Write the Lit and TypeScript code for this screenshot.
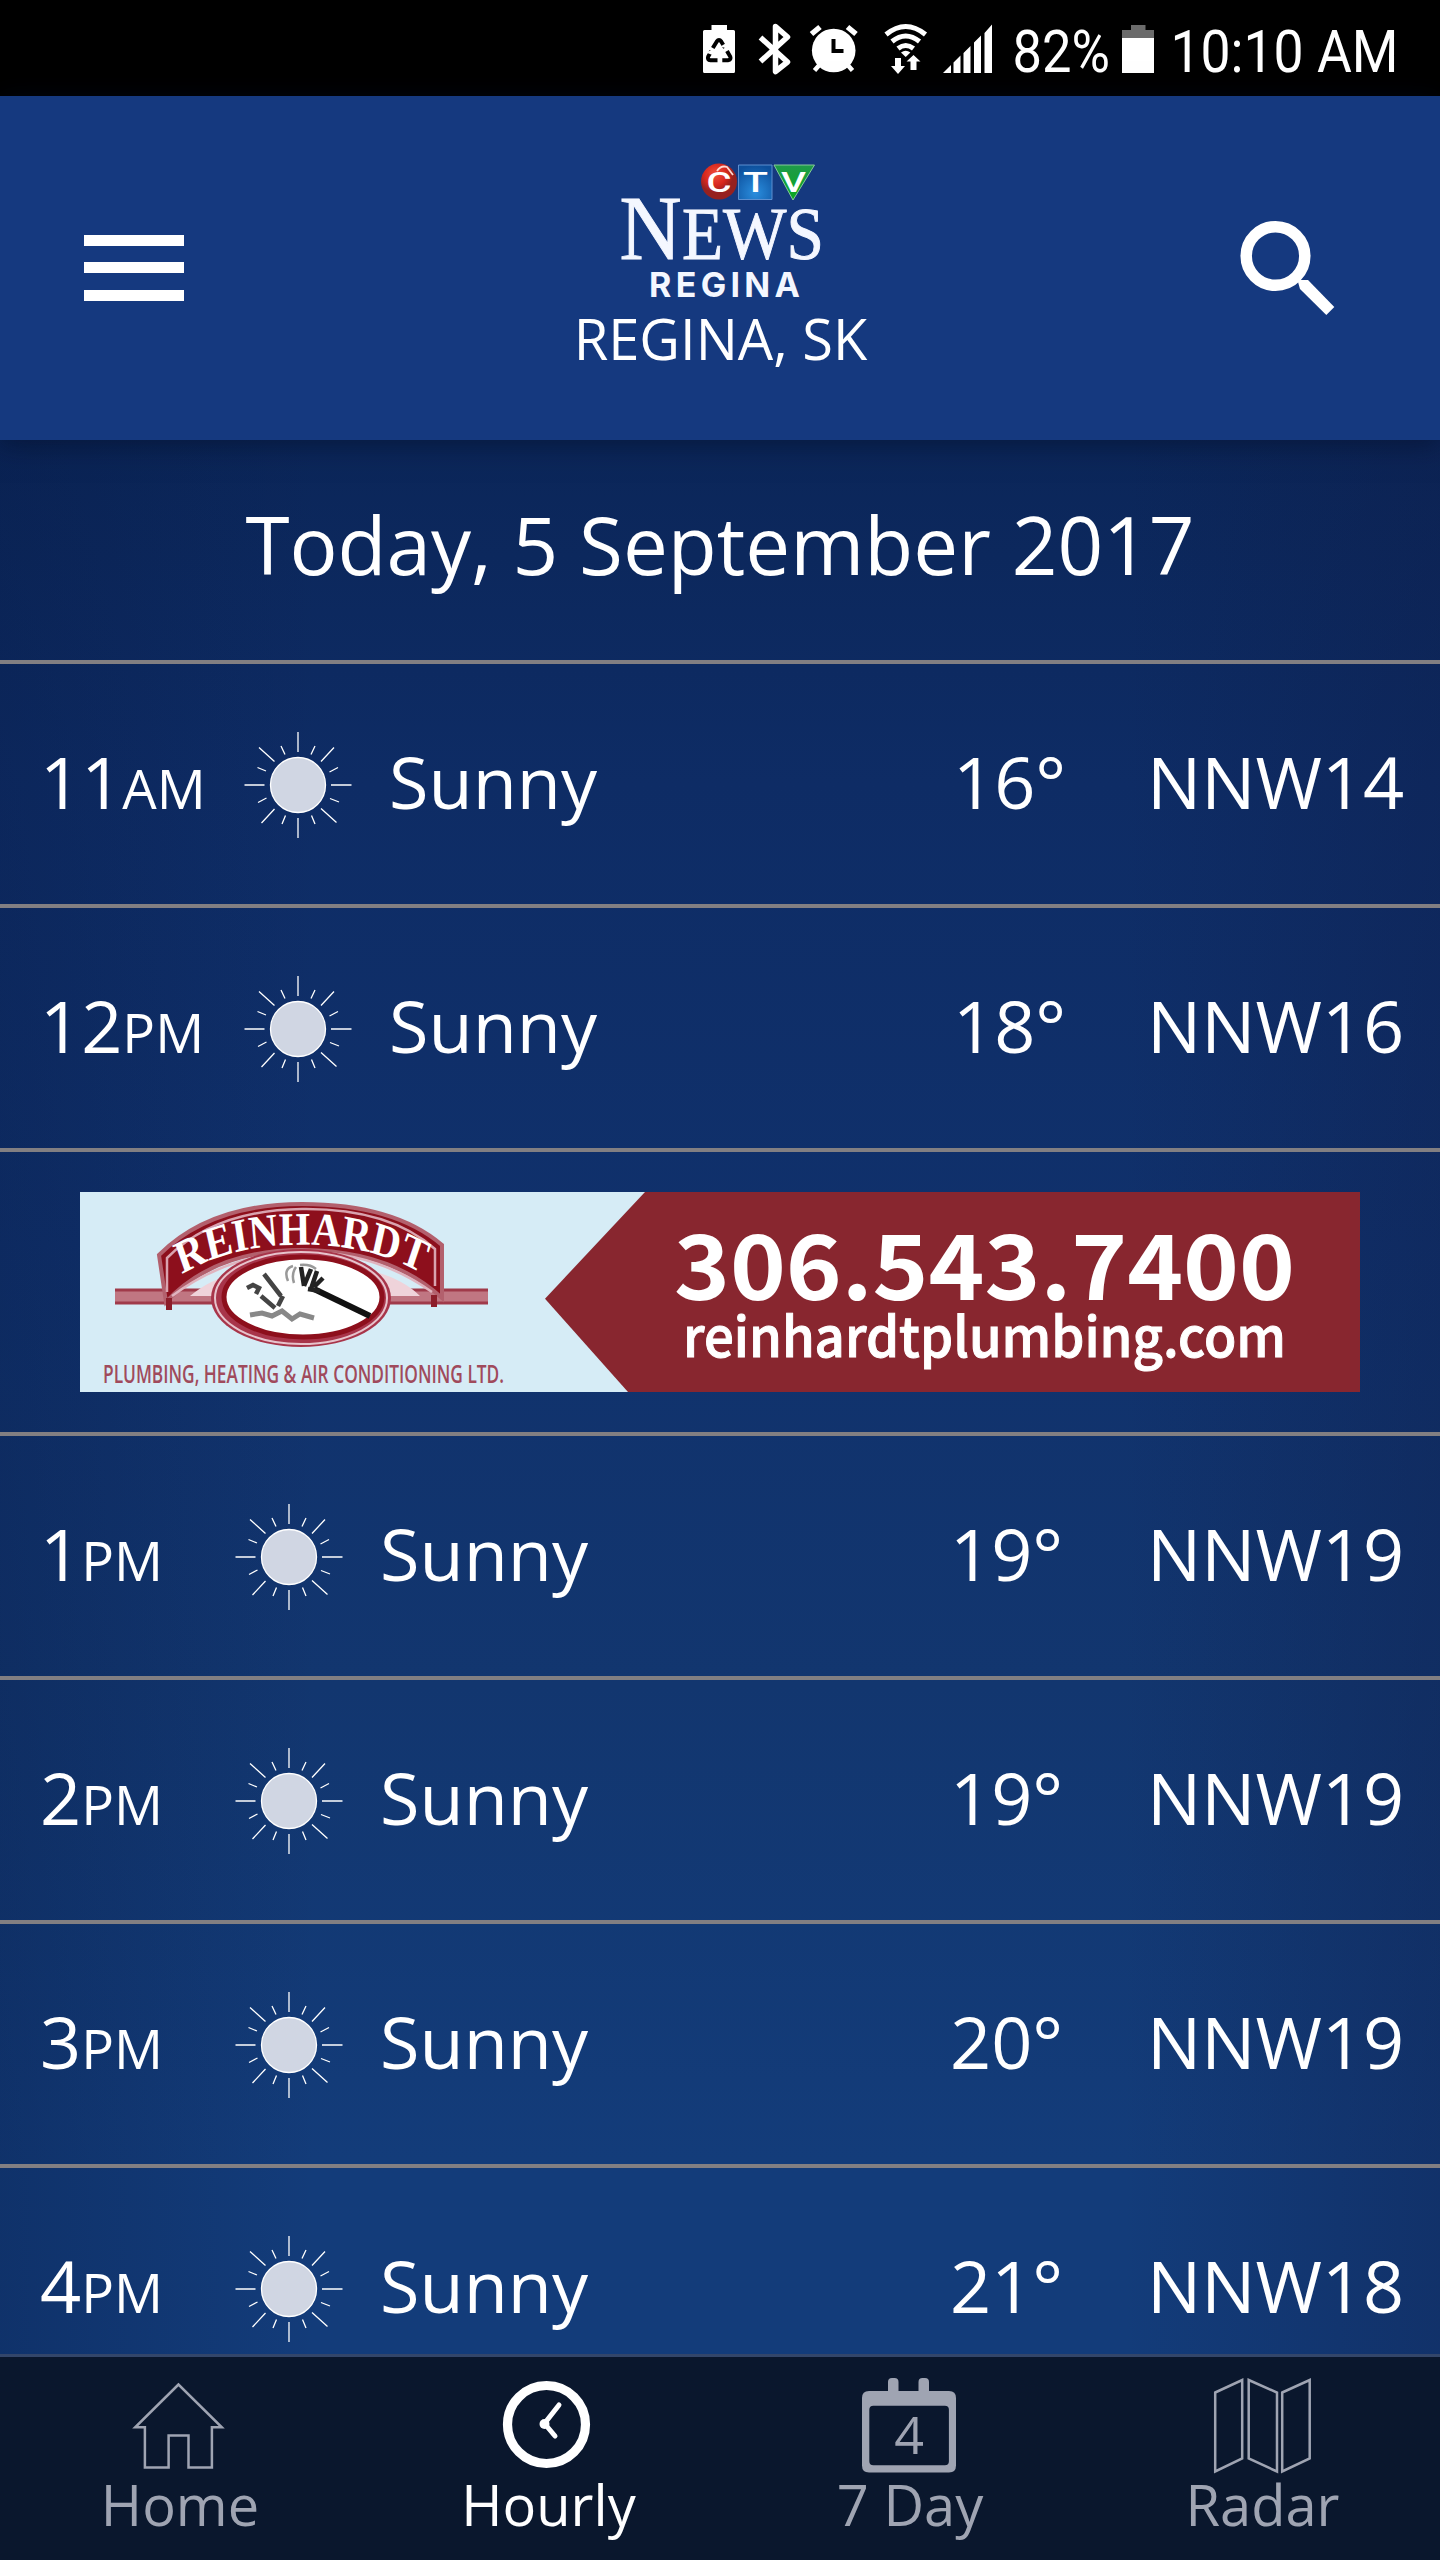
import { LitElement, html, svg, css } from "lit";
import { customElement } from "lit/decorators.js";
import { classMap } from "lit/directives/class-map.js";

interface Hour {
  hour: string;
  period: string;
  condition: string;
  temp: string;
  wind: string;
}

const MORNING: Hour[] = [
  { hour: "11", period: "AM", condition: "Sunny", temp: "16°", wind: "NNW14" },
  { hour: "12", period: "PM", condition: "Sunny", temp: "18°", wind: "NNW16" },
];

const AFTERNOON: Hour[] = [
  { hour: "1", period: "PM", condition: "Sunny", temp: "19°", wind: "NNW19" },
  { hour: "2", period: "PM", condition: "Sunny", temp: "19°", wind: "NNW19" },
  { hour: "3", period: "PM", condition: "Sunny", temp: "20°", wind: "NNW19" },
  { hour: "4", period: "PM", condition: "Sunny", temp: "21°", wind: "NNW18" },
];

@customElement("status-bar")
class StatusBar extends LitElement {
  static styles = css`
    :host {
      display: flex;
      height: 96px;
      background: #000;
      padding-left: 703px;
      box-sizing: border-box;
      flex: none;
    }
    svg { display: block; height: 96px; fill: #fff; flex: none; overflow: visible; }
    text { font-family: Roboto, sans-serif; font-size: 60px; }
    .recycle { margin-right: 24px; }
    .bt { margin-right: 19px; }
    .alarm { margin-right: 26px; }
    .wifi { margin-right: 16px; }
    .signal { margin-right: 18px; }
  `;
  render() {
    return html`
      <svg class="recycle" width="32" viewBox="703 0 32 96">
        <path d="M711.5 25h15.5v5h6.5q1.500 0 1.500 1.500v40q0 1.500-1.500 1.500h-29q-1.500 0-1.500-1.500v-40q0-1.500 1.500-1.500h7z"/>
        <g fill="none" stroke="#000" stroke-width="4">
          <path d="M712.800 48l4-6.500q2.200-3 4.400 0l3.800 6.300"/>
          <path d="M727 51l3.200 5.500q1.300 3.300-2.200 3.700h-7.500"/>
          <path d="M717.500 60.200h-7q-3.500-.3-2.300-3.700l3.200-5.500"/>
        </g>
        <path d="M720.500 46.500l7 2.200v-6.500zM722.300 55.500v9.500l-4.500-4.800zM706 52.500l6.800-3 1 6z"/>
      </svg>
      <svg class="bt" width="32" viewBox="759 0 32 96">
        <path fill="none" stroke="#fff" stroke-width="5.500" stroke-linejoin="round"
          d="M760.500 37.500L787.500 62 775.500 71.500V26.500L787.500 37 760.500 61.500"/>
      </svg>
      <svg class="alarm" width="48" viewBox="810 0 48 96">
        <circle cx="833.700" cy="50.500" r="21.800"/>
        <g stroke="#fff" stroke-width="5.500">
          <path d="M811.500 34l8.500-7M856 34l-8.500-7"/>
          <path stroke-width="4.500" d="M822 62l-7.500 8.500M845 62l7.500 8.500"/>
        </g>
        <path fill="none" stroke="#000" stroke-width="4" d="M833.500 39v12h10"/>
      </svg>
      <svg class="wifi" width="43" viewBox="884 0 43 96">
        <g fill="none" stroke="#fff" stroke-width="5">
          <path d="M886 34.500q19.700-16 39.500 0"/>
          <path d="M892 41.500q13.700-11 27.500 0"/>
          <path d="M898 48.500q7.700-6 15.500 0"/>
        </g>
        <path d="M901 52.500q4.700-3.500 9.400 0l-4.700 4.500z"/>
        <path d="M895 58h6v8h4l-7 8-7-8h4zM910.500 70h6v-8.500h4l-7-6.500-7 6.500h4z"/>
      </svg>
      <svg class="signal" width="50" viewBox="943 0 50 96">
        <path d="M943 73l8-8v8zM953.500 73v-10.500l7-7V73zM963.500 73V53l7-7v27zM974 73V42.500l7-7V73zM984.500 73V33l7.500-8.500V73z"/>
      </svg>
      <svg width="111" viewBox="1011 0 111 96">
        <text x="1012.500" y="72" textLength="97.500" lengthAdjust="spacingAndGlyphs">82%</text>
      </svg>
      <svg width="32" viewBox="1122 0 32 96">
        <path fill="#6b6b6b" d="M1131 25h14.500v5h8.500v9h-32v-9h9z"/>
        <path d="M1122 38h32v35h-32z"/>
      </svg>
      <svg width="260" viewBox="1154 0 260 96">
        <text x="1170.500" y="72" textLength="228" lengthAdjust="spacingAndGlyphs">10:10 AM</text>
      </svg>
    `;
  }
}

@customElement("app-header")
class AppHeader extends LitElement {
  static styles = css`
    :host {
      display: grid;
      grid-template-columns: 84px 1fr 94px 106px;
      height: 344px;
      background: #15397f;
      flex: none;
      box-shadow: 0 4px 26px rgba(3, 12, 36, 0.55);
      position: relative;
    }
    .menu { display: flex; flex-direction: column; gap: 16px; grid-column: 2; padding-top: 139px; grid-row: 1; }
    .menu i { display: block; width: 100px; height: 11px; background: #fff; }
    .menu i:last-child { margin-top: 1px; }
    .brand {
      grid-column: 1 / -1; grid-row: 1;
      display: flex; flex-direction: column; align-items: center;
      padding: 54px 0 0 4px;
    }
    .place {
      font: 56px/76px "Open Sans", sans-serif;
      color: #fff;
      margin: -2px 3px 0 0;
    }
    .search { grid-column: 3; grid-row: 1; padding-top: 124px; }
    svg { display: block; overflow: visible; }
    .serif { font-family: "Liberation Serif", serif; fill: #f4f7ff; stroke: #f4f7ff; stroke-width: 1; }
    .station { font: 700 34px Inter, sans-serif; fill: #f4f7ff; }
    .bug { font: 500 28px Roboto, sans-serif; fill: #fff; }
  `;
  render() {
    return html`
      <div class="menu"><i></i><i></i><i></i></div>
      <div class="brand">
        <svg width="320" height="152" viewBox="562 150 320 152">
          <defs>
            <radialGradient id="r" cx=".4" cy=".3"><stop offset="0" stop-color="#f0503c"/><stop offset=".6" stop-color="#d8281e"/><stop offset="1" stop-color="#96211f"/></radialGradient>
            <radialGradient id="b" cx=".5" cy=".8" r=".8"><stop offset="0" stop-color="#2a8ede"/><stop offset="1" stop-color="#0d4f9c"/></radialGradient>
            <linearGradient id="g" x2="0" y2="1"><stop offset="0" stop-color="#1f9a4a"/><stop offset="1" stop-color="#08a81e"/></linearGradient>
          </defs>
          <circle cx="719" cy="181.500" r="18" fill="url(#r)"/>
          <path d="M717 171q4-6 10-4l6 8" fill="none" stroke="#ffd9d0" stroke-width="1.800"/>
          <path d="M738.500 165h33.500v34.500h-33.500z" fill="url(#b)" stroke="#5c8fd0" stroke-width="1"/>
          <path d="M774 165h40.500l-21.500 35z" fill="url(#g)" stroke="#86c99a" stroke-width="1"/>
          <text class="bug" x="706.500" y="192" textLength="25" lengthAdjust="spacingAndGlyphs">C</text>
          <text class="bug" x="743" y="192" textLength="25" lengthAdjust="spacingAndGlyphs">T</text>
          <text class="bug" x="781" y="191.500" textLength="25" lengthAdjust="spacingAndGlyphs">V</text>
          <text class="serif" font-size="92" x="619.500" y="259" textLength="62" lengthAdjust="spacingAndGlyphs">N</text>
          <text class="serif" font-size="75" x="682" y="259" textLength="142" lengthAdjust="spacingAndGlyphs">EWS</text>
          <text class="station" x="649" y="296.500" textLength="151" lengthAdjust="spacing">REGINA</text>
        </svg>
        <div class="place">REGINA, SK</div>
      </div>
      <div class="search">
        <svg width="94" height="96" viewBox="1240 220 94 96">
          <circle cx="1275.500" cy="256" r="29.300" fill="none" stroke="#fff" stroke-width="11.500"/>
          <path fill="#fff" d="M1298 282l2-2h8l26.300 27-8 8L1300 289z"/>
        </svg>
      </div>
    `;
  }
}

@customElement("sun-icon")
class SunIcon extends LitElement {
  static styles = css`
    :host { display: block; width: 108px; height: 108px; }
    svg { display: block; }
  `;
  render() {
    return html`
      <svg width="108" height="108" viewBox="-54 -54 108 108" fill="none" stroke="#fff" stroke-width="1.300">
        <circle r="27.500" fill="#d0d6e3"/>
        <path d="M0-53v20M0 33v20M-53.500 0h20M33 0h20.500M-39-37.500l15.500 14M36-37.500L23-23.500M-36.500 38L-23.500 24M38.500 37.500L23 23.500"/>
        <path d="M-17-39l4 8.500M17-39l-4 8.500M-16 39l3.500-8.500M17 39l-3.500-8.500M-40.500-17.500l8.500 3.500M40-17.500l-8.500 4.500M-40 17.500l8.500-4.500M41 17l-9-3.500"/>
      </svg>
    `;
  }
}

@customElement("ad-banner")
class AdBanner extends LitElement {
  static styles = css`
    :host { display: block; width: 1280px; height: 200px; margin: 40px 80px; }
    svg { display: block; }
    .arch { font: 700 39px "Liberation Serif", serif; fill: #fff; }
    .tag { font: 600 26px "Open Sans", sans-serif; fill: #a04a5c; }
    .phone { font: 700 90px "Noto Sans CJK JP", "Noto Sans", sans-serif; fill: #fff; }
    .site { font: 500 55px "Noto Sans CJK JP", "Noto Sans", sans-serif; fill: #fff; stroke: #fff; stroke-width: 1; }
  `;
  render() {
    return html`
      <svg width="1280" height="200" viewBox="0 0 1280 200">
        <path fill="#d6ecf6" d="M0 0h1280v200H0z"/>
        <path fill="#88262f" d="M565 0h715v200H548L465 106.700z"/>
        <path fill="#c07682" d="M35 98h373v13H35z"/>
        <path stroke="#a03a4a" stroke-width="3" fill="none" d="M35 111h373M35 98h373"/>
        <path fill="#efd3da" d="M110 104q22-18 42-20l-14 20zM296 80q28 8 44 24h-40z"/>
        <path fill="#8d0f1c" stroke="#b3606d" stroke-width="4" d="M79 63Q130 12 222 12T362 53V106Q310 58 222 58T86 110Z"/>
        <path fill="none" stroke="#d9a3af" stroke-width="2.500" d="M87 100V66Q135 18 222 17T355 57V94"/>
        <path fill="none" stroke="#e0b4bf" stroke-width="2.500" d="M92 104Q150 61 222 60T352 100"/>
        <path fill="none" stroke="#8c1d2a" stroke-width="6" d="M89 118v-12M354 115v-12"/>
        <ellipse cx="221" cy="106" rx="90" ry="49" fill="#a8354a"/>
        <ellipse cx="221" cy="106" rx="86" ry="46" fill="none" stroke="#e7c3cc" stroke-width="2"/>
        <ellipse cx="223" cy="105" rx="79" ry="40" fill="#fff" stroke="#8d0f1c" stroke-width="5"/>
        <path stroke="#111" stroke-width="6" d="M234 97l56 27"/>
        <path stroke="#222" stroke-width="4.500" fill="none" d="M221 75l3 19M231 77l-7 17M237 79l-6 18M243 86l-9 9M228 97l12 2"/>
        <path stroke="#999" stroke-width="2.500" fill="none" d="M208 89q-5-12 5-15M214 91q-3-9 2-16M220 73q10-1 16 4"/>
        <path stroke="#444" stroke-width="4.500" fill="none" d="M184 82l17 22M167 96l6-3 6 3-3 6M181 104l14 12M203 104l-5 10"/>
        <path stroke="#888" stroke-width="5" fill="none" d="M170 123l12-2 10 3 10-5 10 8 8-5 14 4"/>
        <g transform="scale(1 1.200)">
          <path id="arc" fill="none" d="M101 69.500Q150 44 222 44T344 69"/>
          <text class="arch"><textPath href="#arc" startOffset="1" textLength="247" lengthAdjust="spacingAndGlyphs">REINHARDT</textPath></text>
        </g>
        <text class="tag" x="23" y="191" textLength="401" lengthAdjust="spacingAndGlyphs">PLUMBING, HEATING &amp; AIR CONDITIONING LTD.</text>
        <text class="phone" x="594" y="107.500" textLength="621" lengthAdjust="spacingAndGlyphs">306.543.7400</text>
        <text class="site" x="603" y="165" textLength="603" lengthAdjust="spacingAndGlyphs">reinhardtplumbing.com</text>
      </svg>
    `;
  }
}

@customElement("tab-bar")
class TabBar extends LitElement {
  static styles = css`
    :host {
      display: grid;
      grid-template-columns: 360px 377px 346px 357px;
      height: 206px;
      box-sizing: border-box;
      border-top: 3px solid #33466a;
      background: #0a172d;
      flex: none;
    }
    .tab {
      display: flex; flex-direction: column; align-items: center;
      padding-top: 18px;
      color: #9fa4b2;
      font: 56px/76px "Open Sans", sans-serif;
    }
    .tab:last-child { padding-left: 2px; }
    .active { color: #fff; }
    .tab svg { display: block; margin-left: -4px; overflow: visible; }
    .label { margin-top: -9px; }
    .num { font-size: 52px; fill: currentColor; }
  `;
  render() {
    const house = svg`<path fill="none" stroke="currentColor" stroke-width="2.500" d="M50.500 9.500L7.200 52.300h9.700v40.200h23.700V60.500h19.900v32h23.400V52.300h9.900z"/>`;
    const clock = svg`<circle cx="49.500" cy="49.500" r="39" fill="none" stroke="currentColor" stroke-width="9.200"/>
      <circle cx="47.500" cy="49" r="5"/>
      <path fill="none" stroke="currentColor" stroke-width="5" stroke-linecap="round" d="M62 30L47.500 48.500l10.500 12.500"/>`;
    const calendar = svg`<path fill="currentColor" fill-rule="evenodd" d="M29 17V8q0-4 4-4h2.500q4 0 4 4v9h20V8q0-4 4-4h2.500q4 0 4 4v9h20q7 0 7 7v67.500q0 7-7 7H10q-7 0-7-7V24q0-7 7-7zM14.300 31.700q-4 0-4 4v51.600q0 4 4 4h71.600q4 0 4-4V35.700q0-4-4-4z" transform="translate(1 -1)"/>
      <text class="num" x="51" y="78.500" text-anchor="middle">4</text>`;
    const map = svg`<path fill="none" stroke="currentColor" stroke-width="2.500" transform="translate(1 -1)" d="M3.200 18.500l27-12.500v78.500l-27 13zM36.700 6l28.300 12.500v79l-28.300-13zM70.200 18.500L97.700 6v78.500l-27.500 13z"/>`;
    const tabs = [
      { label: "Home", icon: house, active: false },
      { label: "Hourly", icon: clock, active: true },
      { label: "7 Day", icon: calendar, active: false },
      { label: "Radar", icon: map, active: false },
    ];
    return tabs.map(
      (t) => html`
        <div class=${classMap({ tab: true, active: t.active })}>
          <svg width="100" height="100" viewBox="0 0 100 100" fill="currentColor">${t.icon}</svg>
          <div class="label">${t.label}</div>
        </div>
      `
    );
  }
}

@customElement("app-root")
class AppRoot extends LitElement {
  static styles = css`
    :host {
      display: flex;
      flex-direction: column;
      width: 1440px;
      height: 2560px;
      overflow: hidden;
      color: #fff;
      font-family: "Open Sans", sans-serif;
    }
    .content {
      flex: 1;
      min-height: 0;
      overflow: hidden;
      background:
        linear-gradient(90deg, rgba(6, 24, 66, 0.28), rgba(6, 24, 66, 0) 22%, rgba(14, 28, 72, 0) 78%, rgba(14, 28, 72, 0.32)),
        linear-gradient(180deg, #0b2659 0%, #0e2c65 18%, #10316c 42%, #12366f 65%, #133c7a 90%, #133c7a 100%);
    }
    .date {
      height: 220px;
      box-sizing: border-box;
      padding-top: 50px;
      text-align: center;
      font-size: 80px;
      line-height: 108px;
    }
    .row {
      display: grid;
      grid-template-columns: 204px 145px 1fr 194px 253px;
      align-items: center;
      height: 244px;
      box-sizing: border-box;
      border-top: 4px solid #827f82;
      padding: 0 40px 7px 40px;
      font-size: 72px;
      line-height: 98px;
      white-space: nowrap;
    }
    .late { grid-template-columns: 195px 145px 1fr 197px 253px; }
    .period { font-size: 54.5px; line-height: 0; }
    .icon { margin-top: 8px; }
    .sponsor { border-top: 4px solid #827f82; display: flex; }
  `;

  private row(h: Hour, late: boolean) {
    return html`
      <div class=${classMap({ row: true, late })}>
        <div>${h.hour}<span class="period">${h.period}</span></div>
        <sun-icon class="icon"></sun-icon>
        <div>${h.condition}</div>
        <div>${h.temp}</div>
        <div>${h.wind}</div>
      </div>
    `;
  }

  render() {
    return html`
      <status-bar></status-bar>
      <app-header></app-header>
      <div class="content">
        <div class="date">Today, 5 September 2017</div>
        ${MORNING.map((h) => this.row(h, false))}
        <div class="sponsor"><ad-banner></ad-banner></div>
        ${AFTERNOON.map((h) => this.row(h, true))}
      </div>
      <tab-bar></tab-bar>
    `;
  }
}
